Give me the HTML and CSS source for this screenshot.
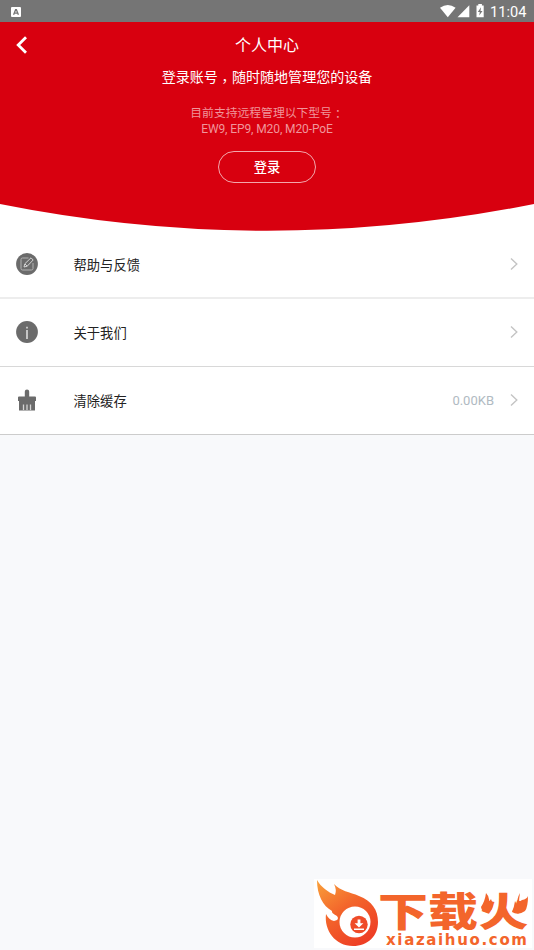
FILE: index.html
```html
<!DOCTYPE html>
<html lang="zh-CN">
<head>
<meta charset="utf-8">
<title>个人中心</title>
<link rel="stylesheet" href="styles.css">
</head>
<body>
<div class="statusbar">
  <svg class="ime" width="10" height="10" viewBox="0 0 10 10"><rect width="10" height="10" rx="1" fill="#fff"/><path d="M2.6 7.8 4.6 2.7h.8l2 5.1M3.4 6.1h3.2" fill="none" stroke="#757575" stroke-width="1.3"/></svg>
  <svg class="signals" width="46" height="14" viewBox="0 0 46 14" fill="#fff"><path d="M0 3.700Q7.800-1.600 15.600 3.700L7.800 13.200Z"/><path d="M17.500 13.200 29.300 1.200V13.200Z"/><path d="M36.500 1.600h1.800V0h3.600v1.600h1.800v11.700h-7.200Z"/><path d="M41 3.300 37.800 8h2l-.6 3.600L42.500 7h-2Z" fill="#757575"/></svg>
  <span class="clock">11:04</span>
</div>
<header class="hero">
  <svg class="curve" width="534" height="209" viewBox="0 0 534 209"><path d="M0 0H534V182Q267 235.400 0 182Z" fill="#d8000f"/></svg>
  <div class="titlebar">
    <svg class="back" width="12" height="18" viewBox="0 0 12 18"><path d="M10 1.200 2.200 9l7.800 7.800" fill="none" stroke="#fff" stroke-width="2.800"/></svg>
    <h1>个人中心</h1>
  </div>
  <p class="lead">登录账号<span class="punct comma" lang="zh-TW">，</span>随时随地管理您的设备</p>
  <p class="models">目前支持远程管理以下型号<span class="punct colon" lang="zh-TW">：</span><br><span class="codes">EW9, EP9, M20, M20-PoE</span></p>
  <button class="login">登录</button>
</header>
<main class="menu">
  <div class="row row-help">
    <svg class="icon" width="22" height="22" viewBox="0 0 22 22" fill="none"><circle cx="11" cy="11" r="10.900" fill="#6b6b6b"/><path d="M12.500 5H6.500Q5 5 5 6.500v9Q5 17 6.500 17h9q1.500 0 1.500-1.500V10" stroke="#b4b4b4"/><path d="m8 14 .8-3.200 6.200-6 2.200 2.200-6 6.200ZM9 11l2.200 2.200" stroke="#d4d4d4"/></svg>
    <span class="label">帮助与反馈</span>
    <svg class="chevron" width="8" height="12" viewBox="0 0 8 12"><path d="m1 .5 5.800 5.500L1 11.500"/></svg>
  </div>
  <div class="row row-about">
    <svg class="icon" width="22" height="22" viewBox="0 0 22 22"><circle cx="11" cy="11" r="10.900" fill="#6b6b6b"/><path d="M10.200 5.800h1.600v1.700h-1.600ZM10.200 9h1.600v9h-1.600Z" fill="#ddd"/></svg>
    <span class="label">关于我们</span>
    <svg class="chevron" width="8" height="12" viewBox="0 0 8 12"><path d="m1 .5 5.800 5.500L1 11.500"/></svg>
  </div>
  <div class="row row-cache">
    <svg class="icon" width="22" height="22" viewBox="0 0 22 22"><path d="M8.800 7.500V2.500Q8.800.5 11 .5t2.200 2v5H19q1 0 1 1V12h-1v9.500H3V12H2V8.500q0-1 1-1Z" fill="#6b6b6b"/><path d="M7.500 15.500V21M11 15.500V21M14.500 15.500V21" stroke="#d5d5d5" stroke-width="1.300"/></svg>
    <span class="label">清除缓存</span>
    <span class="size">0.00KB</span>
    <svg class="chevron" width="8" height="12" viewBox="0 0 8 12"><path d="m1 .5 5.800 5.500L1 11.500"/></svg>
  </div>
</main>
<svg class="watermark" width="218" height="69" viewBox="0 0 218 69">
  <defs><linearGradient id="flame" x1="0" y1="0" x2=".65" y2="1"><stop offset="0" stop-color="#f9a13a"/><stop offset=".5" stop-color="#f3652b"/><stop offset="1" stop-color="#ee3f25"/></linearGradient></defs>
  <rect width="218" height="69" fill="#fff"/>
  <path d="M3 1C7 8 14 13 21 16Q23 11 20 5C26 12 36 13 45 17C58 22 64 31 64 43C64 57 54 67 39 67C21 67 10 51 12 35Q15 41 20 42Q26 41 23 37Q17 34 18 32C9 27 3 16 3 1Z" fill="url(#flame)"/>
  <circle cx="41" cy="43" r="15.500" fill="#fff"/>
  <circle cx="45" cy="45.500" r="8.700" fill="#ef4b28"/>
  <path d="M43.600 40.500h2.800v3.800h3L45 48.500l-4.400-4.200h3ZM40 49.500h10v1.500H40Z" fill="#fff"/>
  <text class="wm-name" transform="translate(64 47) scale(1.040 .82)">下载</text>
  <text class="wm-name" transform="translate(164.500 47) scale(1.040 .82)">火</text>
  <path d="M172 14q4 4 3 9l2-3q4 9-1 12-8 3-9-4 4-6 5-14ZM206 14q-1 6-1 9l3-2q5-1 6-4 0 11-3 15-7 5-13 1 2-4 3-11l2 4q0-7 3-12Z" fill="#f3652b"/>
  <text class="wm-url" x="72" y="66" textLength="141">xiazaihuo.com</text>
</svg>
</body>
</html>
```
FILE: styles.css
```css
* { box-sizing: border-box; }
body {
  margin: 0;
  width: 534px;
  height: 950px;
  overflow: hidden;
  background: #f8f9fb;
  font-family: Roboto, "Noto Sans CJK SC", sans-serif;
}
h1, p { margin: 0; font-weight: 400; }
.punct { display: inline-block; font-family: "Noto Sans CJK TC", sans-serif; line-height: 1; }
.comma { transform: translateY(4px); }
.colon { transform: translateY(1px); }
.statusbar {
  display: flex;
  align-items: center;
  height: 22px;
  padding: 0 8px 0 11px;
  background: #757575;
  color: #fff;
}
.ime { margin-top: 1px; }
.signals { margin-left: auto; margin-right: 4px; margin-bottom: 1px; }
.clock { width: 36px; padding-top: 2px; font-size: 14.600px; line-height: 20px; font-weight: 400; white-space: nowrap; }
.hero {
  position: relative;
  display: flex;
  flex-direction: column;
  align-items: center;
  height: 209px;
  background: #fff;
  color: #fff;
}
.hero > * { position: relative; }
.hero .curve { position: absolute; top: 0; left: 0; }
.titlebar {
  display: grid;
  grid-template-columns: 40px 1fr 40px;
  align-items: center;
  width: 100%;
  height: 44px;
}
.back { margin-left: 16px; margin-top: 2px; }
h1 { font-size: 16px; line-height: 24px; text-align: center; padding-top: 4px; }
.lead { height: 22px; font-size: 14.050px; line-height: 22px; }
.models {
  height: 32px;
  margin-top: 17px;
  font-size: 11.800px;
  line-height: 16px;
  color: #f0959b;
  text-align: center;
}
.codes { font-size: 12px; letter-spacing: -.1px; }
.login {
  width: 98px;
  height: 32px;
  margin-top: 13.500px;
  padding: 2px 0 0;
  border: 1px solid #f3a7ac;
  border-radius: 16px;
  background: transparent;
  color: #fff;
  font: 500 13.300px/28px Roboto, "Noto Sans CJK SC", sans-serif;
}
.menu { background: #fff; }
.row {
  display: flex;
  align-items: center;
  height: 68px;
  padding: 0 16px;
  border-bottom: 1px solid #d8d8d8;
}
.row-help { border-bottom: 2px solid #ededed; }
.row-about { padding-bottom: 2px; }
.row-cache { padding-bottom: 1px; border-bottom-color: #ccc; }
.label { margin-left: 35.500px; padding-top: 3px; font-size: 13.300px; line-height: 20px; color: #222; }
.row-about .label { padding-top: 5px; }
.chevron { margin-left: auto; fill: none; stroke: #c4c4c4; stroke-width: 1.400; }
.size { margin-left: auto; padding-top: 1px; font-size: 13px; color: #b0bac2; }
.size + .chevron { margin-left: 16px; }
.watermark { position: absolute; left: 314px; top: 879px; }
.wm-name { font: 900 48px "Noto Sans CJK SC", sans-serif; fill: #f3652b; }
.wm-url { font: 700 15px "DejaVu Sans", sans-serif; fill: #f3652b; }
```
